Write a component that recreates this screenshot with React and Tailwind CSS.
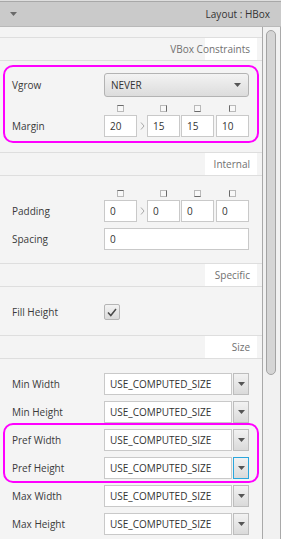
import React from 'react'

function Tri({ color = '#555' }) {
  return (
    <svg width="7" height="4" viewBox="0 0 7 4">
      <path d="M0 0h7L3.5 4z" fill={color} />
    </svg>
  )
}

function SectionHeader({ title }) {
  return (
    <div className="grid h-[24px] border-y border-[#dedede]">
      <div className="[grid-area:1/1] justify-self-end mr-[5px] w-[52px] bg-white" />
      <span className="[grid-area:1/1] justify-self-end self-center pr-[12px] text-[#707070]">{title}</span>
    </div>
  )
}

function Row({ label, children }) {
  return (
    <div className="flex items-center">
      <span className="w-[92px] text-[#3a3a3a]">{label}</span>
      {children}
    </div>
  )
}

// small side toggles above the four inset fields (top, right, bottom, left)
function SideToggles() {
  const sides = ['border-t-[#6a6a6a]', 'border-r-[#6a6a6a]', 'border-b-[#6a6a6a]', 'border-l-[#6a6a6a]']
  return (
    <div className="flex h-[7px]">
      <div className="w-[92px]" />
      <div className="w-[33px] flex justify-center"><div className={`w-[7px] h-[7px] border border-[#b9b9b9] bg-[#f8f8f8] ${sides[0]}`} /></div>
      <div className="w-[10px]" />
      <div className="w-[33px] flex justify-center"><div className={`w-[7px] h-[7px] border border-[#b9b9b9] bg-[#f8f8f8] ${sides[1]}`} /></div>
      <div className="w-[1px]" />
      <div className="w-[33px] flex justify-center"><div className={`w-[7px] h-[7px] border border-[#b9b9b9] bg-[#f8f8f8] ${sides[2]}`} /></div>
      <div className="w-[2px]" />
      <div className="w-[33px] flex justify-center"><div className={`w-[7px] h-[7px] border border-[#b9b9b9] bg-[#f8f8f8] ${sides[3]}`} /></div>
    </div>
  )
}

function Field({ value, className = 'w-[33px]' }) {
  return (
    <div className={`h-[22px] border border-[#c9c9c9] bg-white flex items-center pl-[5px] text-[#333] ${className}`}>
      {value}
    </div>
  )
}

function Insets({ values }) {
  return (
    <div className="flex items-center">
      <Field value={values[0]} />
      <div className="w-[10px] flex justify-center">
        <svg width="5" height="8" viewBox="0 0 5 8">
          <path d="M1 0.5l3 3.5-3 3.5" fill="none" stroke="#a8a8a8" strokeWidth="1" />
        </svg>
      </div>
      <Field value={values[1]} />
      <div className="w-[1px]" />
      <Field value={values[2]} />
      <div className="w-[2px]" />
      <Field value={values[3]} />
    </div>
  )
}

function SizeCombo({ focused }) {
  return (
    <div className="flex h-[22px] gap-[1px]">
      <Field value="USE_COMPUTED_SIZE" className="w-[128px]" />
      <div
        className={
          focused
            ? 'w-[16px] border border-[#2ba6dc] bg-linear-to-b from-[#f2f2f2] to-[#dadada] flex items-center justify-center'
            : 'w-[16px] border border-[#bdbdbd] bg-linear-to-b from-[#f2f2f2] to-[#dadada] flex items-center justify-center'
        }
      >
        <Tri />
      </div>
    </div>
  )
}

export default function App() {
  return (
    <div className="w-[281px] h-[539px] overflow-hidden bg-[#f4f4f4] font-['Open_Sans',sans-serif] text-[10px] leading-none">
      <div className="h-[1px] bg-[#dedede]" />
      <div className="h-[26px] bg-[#cacaca] border-t border-[#a8a8a8] border-b border-b-[#b9b9b9] flex items-center justify-between pl-[10px] pr-[11px]">
        <Tri color="#6a6a6a" />
        <span className="text-[#333]">Layout : HBox</span>
      </div>

      <div className="flex h-[512px]">
        <div className="w-[262px] pt-[10px]">
          <SectionHeader title="VBox Constraints" />

          <div className="mt-[4px] mx-[3px] border-2 border-[#ff00ff] rounded-[10px] pl-[7px] pt-[6px] pb-[4px] flex flex-col">
            <Row label="Vgrow">
              <div className="w-[145px] h-[24px] border border-[#b3b3b3] rounded-[3px] bg-linear-to-b from-[#f3f3f3] to-[#dcdcdc] flex items-center justify-between pl-[6px] pr-[7px] text-[#333]">
                <span>NEVER</span>
                <Tri />
              </div>
            </Row>
            <div className="mt-[8px]"><SideToggles /></div>
            <div className="mt-[3px]">
              <Row label="Margin"><Insets values={['20', '15', '15', '10']} /></Row>
            </div>
          </div>

          <div className="mt-[9px]"><SectionHeader title="Internal" /></div>

          <div className="pl-[12px] pt-[14px] flex flex-col">
            <SideToggles />
            <div className="mt-[3px]">
              <Row label="Padding"><Insets values={['0', '0', '0', '0']} /></Row>
            </div>
            <div className="mt-[6px]">
              <Row label="Spacing"><Field value="0" className="w-[145px]" /></Row>
            </div>
          </div>

          <div className="mt-[13px]"><SectionHeader title="Specific" /></div>

          <div className="pl-[12px] pt-[17px]">
            <Row label="Fill Height">
              <div className="w-[16px] h-[16px] border border-[#b5b5b5] rounded-[2px] bg-linear-to-b from-[#f3f3f3] to-[#dadada] flex items-center justify-center">
                <svg width="10" height="9" viewBox="0 0 10 9">
                  <path d="M1 4.5l2.8 3L9 1" fill="none" stroke="#4a4a4a" strokeWidth="1.5" />
                </svg>
              </div>
            </Row>
          </div>

          <div className="mt-[15px]"><SectionHeader title="Size" /></div>

          <div className="pt-[14px] flex flex-col">
            <div className="pl-[12px] flex flex-col gap-[6px]">
              <Row label="Min Width"><SizeCombo /></Row>
              <Row label="Min Height"><SizeCombo /></Row>
            </div>
            <div className="mx-[3px] border-2 border-[#ff00ff] rounded-[10px] pl-[7px] pt-[4px] pb-[2px] flex flex-col gap-[6px]">
              <Row label="Pref Width"><SizeCombo /></Row>
              <Row label="Pref Height"><SizeCombo focused /></Row>
            </div>
            <div className="pl-[12px] mt-[2px] flex flex-col gap-[6px]">
              <Row label="Max Width"><SizeCombo /></Row>
              <Row label="Max Height"><SizeCombo /></Row>
            </div>
          </div>
        </div>

        <div className="w-[19px] border-x border-[#a9a9a9] bg-[#f1f1f1] pt-[3px] pl-[3px]">
          <div className="w-[10px] h-[345px] rounded-full border border-[#a3a3a3] bg-[#d5d5d5]" />
        </div>
      </div>
    </div>
  )
}
